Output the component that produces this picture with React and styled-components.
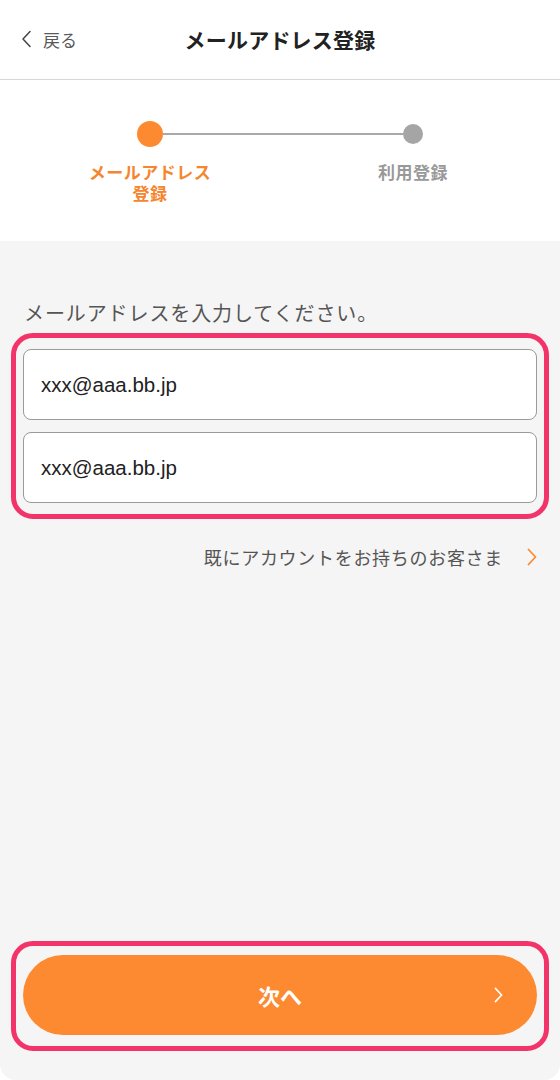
import React from "react";
import styled, { createGlobalStyle } from "styled-components";

const GlobalStyle = createGlobalStyle`
  html, body { margin: 0; padding: 0; background: #ffffff; }
  body { font-family: "Noto Sans CJK JP", "Noto Sans", sans-serif; -webkit-font-smoothing: antialiased; }
  * { box-sizing: border-box; }
`;

const ORANGE = "#fd8a31";
const PINK = "#f2346a";

const Page = styled.div`
  width: 560px;
  height: 1080px;
  display: flex;
  flex-direction: column;
  background: #ffffff;
`;

const Header = styled.header`
  height: 80px;
  flex-shrink: 0;
  display: grid;
  grid-template-columns: 120px 1fr 120px;
  align-items: center;
  border-bottom: 1px solid #d8d8d8;
  padding-bottom: 1px;
`;

const Back = styled.button`
  display: flex;
  align-items: center;
  gap: 11px;
  padding: 0 0 0 21px;
  border: none;
  background: none;
  font-family: inherit;
  font-size: 17px;
  color: #5a5a5a;
  cursor: pointer;
`;

const Title = styled.h1`
  margin: 0;
  text-align: center;
  font-size: 21px;
  font-weight: 700;
  color: #222;
  letter-spacing: 0.2px;
`;

const StepSection = styled.section`
  height: 161px;
  flex-shrink: 0;
  padding-top: 41px;
  background: #ffffff;
`;

const Track = styled.div`
  display: flex;
  align-items: center;
  height: 26px;
  padding-left: 137px;
`;

const Dot = styled.span`
  flex-shrink: 0;
  width: ${(p) => (p.$active ? 26 : 20)}px;
  height: ${(p) => (p.$active ? 26 : 20)}px;
  border-radius: 50%;
  background: ${(p) => (p.$active ? ORANGE : "#a5a5a5")};
`;

const Connector = styled.span`
  width: 240px;
  height: 2px;
  background: #a9a9a9;
`;

const Labels = styled.div`
  display: flex;
  padding-left: 80px;
  gap: 123px;
  margin-top: 14px;
`;

const StepLabel = styled.div`
  width: 140px;
  text-align: center;
  font-size: 17px;
  line-height: 21px;
  letter-spacing: 0.5px;
  font-weight: 700;
  color: ${(p) => (p.$active ? "#f5862e" : "#999999")};
`;

const LabelLine = styled.span`
  display: block;
  height: 21px;
`;

const Content = styled.main`
  flex: 1;
  display: flex;
  flex-direction: column;
  background: #f5f5f5;
  border-radius: 0 0 16px 16px;
  padding: 57px 11px 29px;
`;

const Prompt = styled.p`
  margin: 0 0 5px 13px;
  font-size: 20px;
  line-height: 30px;
  letter-spacing: 0.9px;
  color: #555;
`;

const Highlight = styled.div`
  border: 5px solid ${PINK};
  border-radius: 22px;
  padding: ${(p) => p.$pad};
  display: flex;
  flex-direction: column;
  gap: 12px;
`;

const Field = styled.input`
  height: 71px;
  width: 100%;
  border: 1.5px solid #9a9a9a;
  border-radius: 8px;
  background: #fff;
  padding: 0 17px;
  font-family: "Liberation Sans", "Noto Sans CJK JP", sans-serif;
  font-size: 20.5px;
  color: #222;
  outline: none;
`;

const LinkRow = styled.a`
  align-self: flex-end;
  display: flex;
  align-items: center;
  gap: 24px;
  margin-top: 25px;
  margin-right: 12px;
  font-size: 18px;
  line-height: 26px;
  letter-spacing: 0.7px;
  color: #555;
  text-decoration: none;
`;

const Spacer = styled.div`
  flex: 1;
`;

const NextButton = styled.button`
  position: relative;
  height: 80px;
  width: 100%;
  border: none;
  border-radius: 40px;
  background: ${ORANGE};
  color: #fff;
  font-family: inherit;
  font-size: 22px;
  font-weight: 700;
  display: flex;
  align-items: center;
  justify-content: center;
  cursor: pointer;
`;

const ButtonChevron = styled.span`
  position: absolute;
  right: 34px;
  top: 50%;
  transform: translateY(-50%);
  display: flex;
`;

const Chevron = ({ color, w = 10, h = 18, sw = 1.8 }) => (
  <svg width={w} height={h} viewBox="0 0 10 18" fill="none">
    <polyline
      points="1.5,1.5 8.5,9 1.5,16.5"
      stroke={color}
      strokeWidth={sw}
      strokeLinecap="round"
      strokeLinejoin="round"
    />
  </svg>
);

const ChevronLeft = ({ color }) => (
  <svg width="11" height="18" viewBox="0 0 10 18" fill="none">
    <polyline
      points="8.5,1.5 1.5,9 8.5,16.5"
      stroke={color}
      strokeWidth="1.5"
      strokeLinecap="round"
      strokeLinejoin="round"
    />
  </svg>
);

export default function App() {
  return (
    <>
      <GlobalStyle />
      <Page>
        <Header>
          <Back>
            <ChevronLeft color="#444" />
            戻る
          </Back>
          <Title>メールアドレス登録</Title>
          <div />
        </Header>

        <StepSection>
          <Track>
            <Dot $active />
            <Connector />
            <Dot />
          </Track>
          <Labels>
            <StepLabel $active>
              <LabelLine>メールアドレス</LabelLine>
              <LabelLine>登録</LabelLine>
            </StepLabel>
            <StepLabel>利用登録</StepLabel>
          </Labels>
        </StepSection>

        <Content>
          <Prompt>メールアドレスを入力してください。</Prompt>
          <Highlight $pad="11px 7px">
            <Field type="email" defaultValue="xxx@aaa.bb.jp" />
            <Field type="email" defaultValue="xxx@aaa.bb.jp" />
          </Highlight>
          <LinkRow href="#">
            既にアカウントをお持ちのお客さま
            <Chevron color={ORANGE} w={10} h={18} sw={1.8} />
          </LinkRow>
          <Spacer />
          <Highlight $pad="9px 7px 11px">
            <NextButton>
              次へ
              <ButtonChevron>
                <Chevron color="#fff" w={9} h={16} sw={1.8} />
              </ButtonChevron>
            </NextButton>
          </Highlight>
        </Content>
      </Page>
    </>
  );
}
